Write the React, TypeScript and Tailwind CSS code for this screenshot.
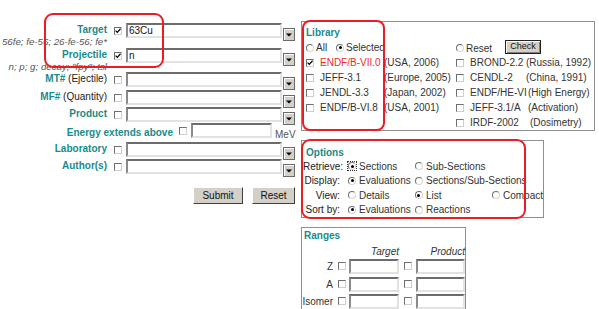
import React from "react";

const teal = "text-[#1a8a8a] font-bold";

function Check({ on = false }: { on?: boolean }) {
  return (
    <span className="relative inline-block w-[8px] h-[8px] shrink-0 bg-white border border-t-[#6f6f6f] border-l-[#6f6f6f] border-r-[#cfcfcf] border-b-[#cfcfcf]">
      {on && (
        <svg viewBox="0 0 6 6" className="absolute left-0 top-0 w-[6px] h-[6px]">
          <path d="M0.6 2.6 L2.3 4.4 L5.6 0.8" fill="none" stroke="#000" strokeWidth="1.3" />
        </svg>
      )}
    </span>
  );
}

function Radio({ on = false, focus = false }: { on?: boolean; focus?: boolean }) {
  return (
    <span className="relative inline-flex items-center justify-center w-[8px] h-[8px] shrink-0 rounded-full bg-white border border-t-[#6f6f6f] border-l-[#6f6f6f] border-r-[#d6d6d6] border-b-[#d6d6d6]">
      {on && <span className="w-[3px] h-[3px] rounded-full bg-black" />}
      {focus && <span className="absolute -inset-[2px] border border-dotted border-[#333]" />}
    </span>
  );
}

function TextBox({ className = "", value = "" }: { className?: string; value?: string }) {
  return (
    <div
      className={`h-[15px] shrink-0 bg-white border-2 border-t-[#6c6c6c] border-l-[#8a8a8a] border-r-[#e2e2e2] border-b-[#e2e2e2] pl-[1px] text-[10px] leading-[11px] text-[#111] ${className}`}
    >
      {value}
    </div>
  );
}

function Drop() {
  return (
    <div className="w-[12px] h-[13px] mt-[5px] ml-[1px] shrink-0 flex items-center justify-center bg-[#d4d0c8] border border-[#6a6a6a] shadow-[inset_1px_1px_0_#fff]">
      <svg width="6" height="4" viewBox="0 0 6 4">
        <path d="M0 0.5H6L3 3.5Z" fill="#000" />
      </svg>
    </div>
  );
}

function Btn({ label, className = "" }: { label: string; className?: string }) {
  return (
    <div
      className={`h-[17px] flex items-center justify-center bg-[#d4d0c8] border border-t-white border-l-white border-r-[#404040] border-b-[#404040] text-[10px] text-[#111] ${className}`}
    >
      {label}
    </div>
  );
}

function Field({
  label,
  extra,
  hint,
  value,
  checked,
  h,
}: {
  label: string;
  extra?: string;
  hint?: string;
  value?: string;
  checked?: boolean;
  h: string;
}) {
  return (
    <div className={`flex items-start ${h}`}>
      <div className="w-[107px] shrink-0 flex flex-col items-end">
        <div className="leading-[12px] pt-[1px] whitespace-nowrap">
          <span className={teal}>{label}</span>
          {extra && <span className="text-[#222]"> {extra}</span>}
        </div>
        {hint && (
          <div className="w-[107px] flex justify-end whitespace-nowrap italic text-[9.7px] text-[#555] leading-[11px]">
            {hint}
          </div>
        )}
      </div>
      <div className="ml-[7px] mt-[4px] flex">
        <Check on={checked} />
      </div>
      <TextBox className="ml-[4px] w-[156px]" value={value} />
      <Drop />
    </div>
  );
}

function LibRow({ name, note, on, red, nameW }: { name: string; note: string; on?: boolean; red?: boolean; nameW: string }) {
  return (
    <div className="h-[15px] flex items-center whitespace-nowrap">
      <Check on={on} />
      <span className={`ml-[6px] ${nameW} ${red ? "text-[#ee2a2a]" : "text-[#333]"}`}>{name}</span>
      <span className="text-[#333]">{note}</span>
    </div>
  );
}

function OptRow({ label, items }: { label: string; items: { t: string; on?: boolean; focus?: boolean }[] }) {
  const widths = ["w-[67px]", "w-[77px]", ""];
  return (
    <div className="h-[14.5px] flex items-center whitespace-nowrap">
      <span className="w-[37px] text-right text-[#222]">{label}</span>
      <div className="ml-[8px] flex">
        {items.map((it, i) => (
          <div key={i} className={`flex items-center ${widths[i]}`}>
            {it.t ? (
              <>
                <Radio on={it.on} focus={it.focus} />
                <span className="ml-[3px] text-[#333]">{it.t}</span>
              </>
            ) : null}
          </div>
        ))}
      </div>
    </div>
  );
}

function RangeRow({ label }: { label: string }) {
  return (
    <div className="h-[17.5px] flex items-start">
      <span className="w-[30px] h-[15px] flex items-center justify-end text-[#333]">{label}</span>
      <div className="ml-[5px] mt-[3px] flex">
        <Check />
      </div>
      <TextBox className="ml-[3px] w-[50px]" />
      <div className="ml-[5px] mt-[3px] flex">
        <Check />
      </div>
      <TextBox className="ml-[4px] w-[49px]" />
    </div>
  );
}

export default function App() {
  return (
    <div className="relative w-[599px] h-[309px] overflow-hidden bg-white flex text-[10px] text-[#333] font-['Liberation_Sans',Arial,sans-serif]">
      {/* left form */}
      <div className="w-[301px] shrink-0 pt-[23px] flex flex-col">
        <Field label="Target" hint="56fe; fe-56; 26-fe-56; fe*" value="63Cu" checked h="h-[25px]" />
        <Field label="Projectile" hint={'n; p; g; decay; "fpy"; tsl'} value="n" checked h="h-[24px]" />
        <Field label="MT#" extra="(Ejectile)" h="h-[18px]" />
        <Field label="MF#" extra="(Quantity)" h="h-[17px]" />
        <Field label="Product" h="h-[17px]" />
        <div className="h-[18px] flex items-start">
          <div className={`w-[173px] shrink-0 text-right leading-[12px] pt-[3px] ${teal}`}>Energy extends above</div>
          <div className="ml-[6px] mt-[3px] flex">
            <Check />
          </div>
          <TextBox className="ml-[4px] w-[81px] -mt-[1px]" />
          <span className="ml-[3px] mt-[3px] text-[#555]">MeV</span>
        </div>
        <Field label="Laboratory" h="h-[17px]" />
        <Field label="Author(s)" h="h-[17px]" />
        <div className="mt-[11px] flex">
          <Btn label="Submit" className="ml-[193px] w-[50px]" />
          <Btn label="Reset" className="ml-[9px] w-[43px]" />
        </div>
      </div>

      {/* right panels */}
      <div className="pt-[21px] flex flex-col">
        <div className="w-[294px] border border-[#909090] pt-[4px] pl-[4px]">
          <div className={`leading-[14px] ${teal}`}>Library</div>
          <div className="flex">
            <div className="w-[150px]">
              <div className="h-[15px] flex items-center">
                <Radio />
                <span className="ml-[2px] w-[20px]">All</span>
                <Radio on />
                <span className="ml-[2px]">Selected</span>
              </div>
              <LibRow name="ENDF/B-VII.0" note="(USA, 2006)" on red nameW="w-[64px]" />
              <LibRow name="JEFF-3.1" note="(Europe, 2005)" nameW="w-[64px]" />
              <LibRow name="JENDL-3.3" note="(Japan, 2002)" nameW="w-[64px]" />
              <LibRow name="ENDF/B-VI.8" note="(USA, 2001)" nameW="w-[64px]" />
            </div>
            <div>
              <div className="h-[15px] flex items-center">
                <Radio />
                <span className="ml-[2px] mt-[2px] w-[39px]">Reset</span>
                <div className="w-[36px] h-[14px] -mt-[2px] flex items-center justify-center bg-[#d4d0c8] border border-[#222] shadow-[inset_1px_1px_0_#fff,inset_-1px_-1px_0_#808080] text-[9px] text-[#111]">
                  Check
                </div>
              </div>
              <LibRow name="BROND-2.2" note="(Russia, 1992)" nameW="w-[56px]" />
              <LibRow name="CENDL-2" note="(China, 1991)" nameW="w-[56px]" />
              <LibRow name="ENDF/HE-VI" note="(High Energy)" nameW="w-[58px]" />
              <LibRow name="JEFF-3.1/A" note="(Activation)" nameW="w-[58px]" />
              <LibRow name="IRDF-2002" note="(Dosimetry)" nameW="w-[60px]" />
            </div>
          </div>
        </div>

        <div className="mt-[9px] w-[243px] border border-[#909090] pt-[5px] pl-[1px]">
          <div className={`leading-[13px] pl-[3px] ${teal}`}>Options</div>
          <OptRow label="Retrieve:" items={[{ t: "Sections", on: true, focus: true }, { t: "Sub-Sections" }]} />
          <OptRow label="Display:" items={[{ t: "Evaluations", on: true }, { t: "Sections/Sub-Sections" }]} />
          <OptRow label="View:" items={[{ t: "Details" }, { t: "List", on: true }, { t: "Compact" }]} />
          <OptRow label="Sort by:" items={[{ t: "Evaluations", on: true }, { t: "Reactions" }]} />
        </div>

        <div className="mt-[9px] w-[165px] border border-[#909090] pt-[1px] pl-[1px] pb-[4px]">
          <div className={`leading-[13px] pl-[1px] ${teal}`}>Ranges</div>
          <div className="h-[17px] pt-[2px] flex items-center italic text-[#333]">
            <span className="w-[96px] text-right">Target</span>
            <span className="ml-[17px] w-[49px] text-right">Product</span>
          </div>
          <RangeRow label="Z" />
          <RangeRow label="A" />
          <RangeRow label="Isomer" />
          <RangeRow label="" />
        </div>
      </div>

      {/* red highlight marks drawn over the page */}
      <div className="absolute left-[44px] top-[13px] w-[120px] h-[55px] rounded-[9px] border-2 border-[#ec1c24]" />
      <div className="absolute left-[302px] top-[20px] w-[83px] h-[111px] rounded-[8px] border-2 border-[#ec1c24]" />
      <div className="absolute left-[301px] top-[139px] w-[225px] h-[80px] rounded-[9px] border-2 border-[#ec1c24]" />
    </div>
  );
}
